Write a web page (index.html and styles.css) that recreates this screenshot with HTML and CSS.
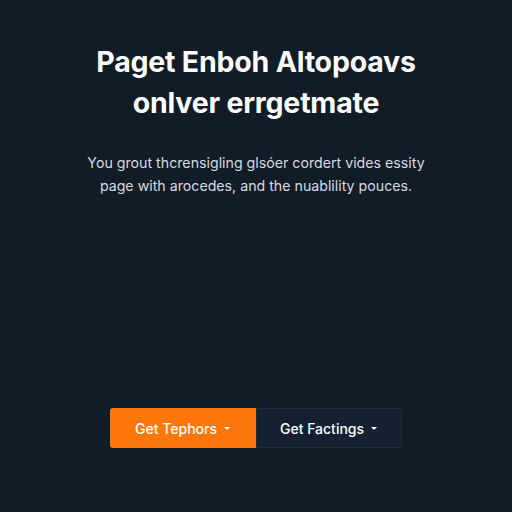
FILE: index.html
```html
<!DOCTYPE html>
<html lang="en">
<head>
  <meta charset="UTF-8">
  <meta name="viewport" content="width=device-width, initial-scale=1.0">
  <title>Paget Enboh Altopoavs</title>
  <link rel="stylesheet" href="styles.css">
</head>
<body>
  <!-- Hero -->
  <main class="hero">
    <h1 class="hero-title">Paget Enboh Altopoavs<br>onlver errgetmate</h1>
    <p class="hero-text">You grout thcrensigling glsóer cordert vides essity<br>page with arocedes, and the nuablility pouces.</p>

    <div class="actions">
      <button class="btn btn-primary">Get Tephors
        <svg class="caret" viewBox="0 0 8 5"><path d="M1 1l3 3 3-3z"/></svg>
      </button>
      <button class="btn btn-dark">Get Factings
        <svg class="caret" viewBox="0 0 8 5"><path d="M1 1l3 3 3-3z"/></svg>
      </button>
    </div>
  </main>
</body>
</html>
```

FILE: styles.css
```css
/* Page */
html, body {
  margin: 0;
  height: 100%;
  background-color: #111c27;
}
body {
  font-family: Inter, "Open Sans", sans-serif;
  color: #fff;
}
.hero {
  display: flex;
  flex-direction: column;
  align-items: center;
  text-align: center;
  padding-top: 41px;
}
.hero-title {
  margin: 0;
  font-size: 28.5px;
  line-height: 41px;
  font-weight: 700;
  letter-spacing: -0.2px;
}
.hero-text {
  margin: 28px 0 0;
  font-size: 14.2px;
  line-height: 23px;
  color: #d6dbe0;
}
.actions {
  display: flex;
  margin-top: 211px;
}
.btn {
  display: flex;
  align-items: center;
  justify-content: center;
  gap: 6px;
  width: 146px;
  height: 40px;
  border: 1px solid transparent;
  font-family: inherit;
  font-size: 14px;
  font-weight: 500;
  color: #fff;
  cursor: pointer;
}
.btn-primary {
  background-color: #ff770a;
  border-radius: 3px 0 0 3px;
}
.btn-dark {
  background-color: #152131;
  border-color: #1f2c3b;
  border-radius: 0 3px 3px 0;
}
.caret {
  width: 8px;
  height: 5px;
  fill: #fff;
}
```
